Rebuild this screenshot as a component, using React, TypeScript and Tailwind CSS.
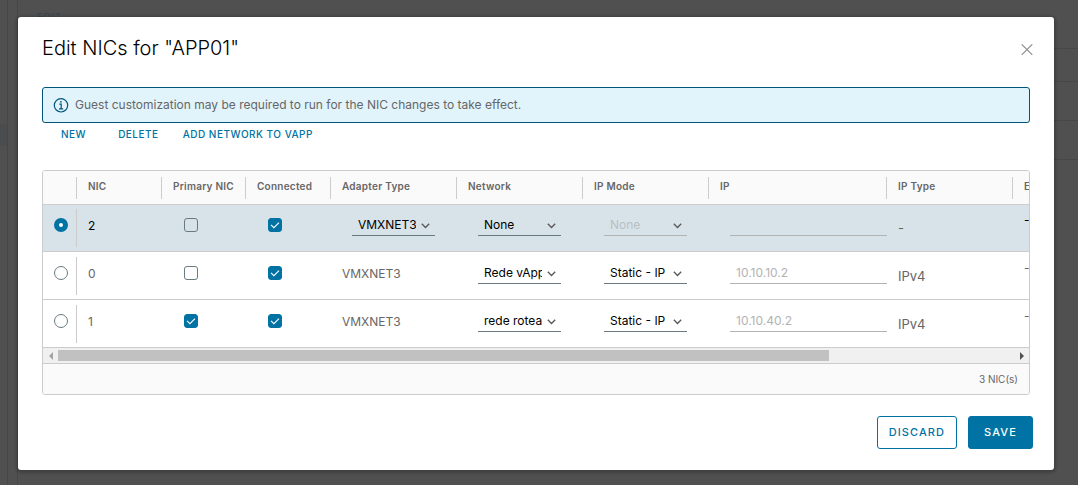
import { useRef, useState } from "react";

type Nic = {
  id: string;
  primary: boolean;
  connected: boolean;
  adapter: string;
  adapterEditable: boolean;
  network: string;
  ipMode: string;
  ip: string;
  ipType: string;
};

const nics: Nic[] = [
  { id: "2", primary: false, connected: true, adapter: "VMXNET3", adapterEditable: true, network: "None", ipMode: "None", ip: "", ipType: "-" },
  { id: "0", primary: false, connected: true, adapter: "VMXNET3", adapterEditable: false, network: "Rede vApp", ipMode: "Static - IP Pool", ip: "10.10.10.2", ipType: "IPv4" },
  { id: "1", primary: true, connected: true, adapter: "VMXNET3", adapterEditable: false, network: "rede roteada", ipMode: "Static - IP Pool", ip: "10.10.40.2", ipType: "IPv4" },
];

const columns = ["", "NIC", "Primary NIC", "Connected", "Adapter Type", "Network", "IP Mode", "IP", "IP Type", "External IP"];

function CheckBox({ label, defaultChecked }: { label: string; defaultChecked: boolean }) {
  return (
    <span className="relative mt-[13px] ml-[22px] block size-[14px]">
      <input
        type="checkbox"
        aria-label={label}
        defaultChecked={defaultChecked}
        className="peer block size-[14px] appearance-none rounded-[3px] border border-[#6a7a81] checked:border-[#0072a3] checked:bg-[#0072a3]"
      />
      <svg viewBox="0 0 14 14" className="pointer-events-none absolute inset-0 hidden size-[14px] peer-checked:block" fill="none" stroke="#fff" strokeWidth="1.1">
        <path d="M3 6.9 5.9 9.7 11 4.6" />
      </svg>
    </span>
  );
}

function Select({ label, value, disabled = false }: { label: string; value: string; disabled?: boolean }) {
  return (
    <span className="relative mt-2 ml-[21px] block w-[83px]">
      <select
        aria-label={label}
        disabled={disabled}
        defaultValue={value}
        className="block h-[23px] w-full appearance-none overflow-hidden border-b border-[#6a7a81] pt-px pr-[19px] pl-[6px] text-xs text-black disabled:border-[#b3b3b3] disabled:text-[#b8bfc3] disabled:opacity-100"
      >
        <option>{value}</option>
      </select>
      <svg viewBox="0 0 9 6" className="pointer-events-none absolute top-[10px] right-[5px] h-[6px] w-[9px]" fill="none" stroke="#565656" strokeWidth="1.3">
        <path d="M.8 .8 4.5 4.5 8.2 .8" />
      </svg>
    </span>
  );
}

function Backdrop() {
  return (
    <div aria-hidden="true" className="absolute inset-0 overflow-hidden bg-[#505050]">
      <div className="absolute top-0 bottom-0 left-0 w-2 border-r border-[#474747]">
        <div className="mt-[124px] h-[22px] bg-[#4a4c4e]" />
      </div>
      <div className="absolute top-0 bottom-0 left-[17px] border-l border-[#474747]" />
      <div className="absolute top-[11px] left-[37px] text-[10px] leading-3 tracking-wider text-[#35474e]">EDIT</div>
      <div className="absolute top-12 right-0 h-[34px] w-6 border-y border-[#474747]" />
      <div className="absolute top-[120px] right-0 h-10 w-6 border-y border-[#474747]" />
    </div>
  );
}

export default function App() {
  const [selected, setSelected] = useState("2");
  const viewport = useRef<HTMLDivElement>(null);
  const scroll = (left: number) => viewport.current?.scrollBy({ left });
  const action = "cursor-pointer text-[10px] leading-[22px] font-medium tracking-wider text-[#0072a3]";

  return (
    <div className="relative min-h-screen pt-[17px] pr-6 pb-[15px] pl-[18px] font-['Inter','Liberation_Sans',sans-serif] text-[#666]">
      <Backdrop />
      <section role="dialog" aria-labelledby="dialog-title" className="relative rounded-[3px] bg-white pt-[19px] pb-[21px] shadow-[0_1px_3px_2px_rgba(0,0,0,0.2)]">
        <header className="mx-6 flex items-start justify-between">
          <h1 id="dialog-title" className="text-xl leading-6 font-light text-black">Edit NICs for "APP01"</h1>
          <button type="button" aria-label="Close" className="mt-2 -mr-[3px] cursor-pointer">
            <svg viewBox="0 0 12 12" className="size-3" fill="none" stroke="#8c8c8c" strokeWidth="1.1">
              <path d="m.7.3 10.6 10.6M11.3.3.7 10.9" />
            </svg>
          </button>
        </header>

        <div role="status" className="mx-6 mt-[27px] flex h-9 items-center gap-[6px] rounded-[3px] border border-[#00567a] bg-[#e1f4fc] pl-[10px]">
          <svg viewBox="0 0 16 16" className="size-4 shrink-0" fill="none" stroke="#00567a" strokeWidth="1.2">
            <circle cx="8" cy="8.3" r="6.7" />
            <path d="M6.3 7.2H8.2V11.6M6 11.8h4.2" />
            <circle cx="7.9" cy="4.8" r=".9" fill="#00567a" stroke="none" />
          </svg>
          <p className="text-xs">Guest customization may be required to run for the NIC changes to take effect.</p>
        </div>

        <div className="mx-6 flex pl-[19px]">
          <button type="button" className={`${action} mr-8`}>NEW</button>
          <button type="button" className={`${action} mr-6`}>DELETE</button>
          <button type="button" className={action}>ADD NETWORK TO VAPP</button>
        </div>

        <div className="mx-6 mt-[25px] overflow-hidden rounded-[3px] border border-[#ccc]">
          <div ref={viewport} className="overflow-hidden">
            <table className="w-[1222px] table-fixed border-separate border-spacing-0 text-left">
              <colgroup>
                <col className="w-[34px]" />
                <col className="w-[85px]" />
                <col className="w-[84px]" />
                <col className="w-[85px]" />
                <col className="w-[126px]" />
                <col className="w-[126px]" />
                <col className="w-[126px]" />
                <col className="w-[178px]" />
                <col className="w-[126px]" />
                <col />
              </colgroup>
              <thead className="bg-[#fafafa]">
                <tr>
                  {columns.map((name, i) => (
                    <th key={i} scope="col" className="h-[34px] border-b border-[#ccc] p-0 align-middle">
                      <div className="h-[22px] border-r border-[#ccc] pl-[11px] text-[10px] leading-[19px] font-semibold tracking-wide">{name}</div>
                    </th>
                  ))}
                </tr>
              </thead>
              <tbody>
                {nics.map((nic) => {
                  const on = nic.id === selected;
                  return (
                    <tr
                      key={nic.id}
                      className={`h-12 text-xs first:h-[47px] [&:not(:first-child)>td]:pt-px [&>td]:border-b [&>td]:border-[#ccc] [&>td]:align-top ${on ? "bg-[#d8e3e9] text-black" : ""}`}
                    >
                      <td>
                        <div className="mt-1 h-[38px] border-r border-[#ccc] pt-[9px] pl-[11px]">
                          <input
                            type="radio"
                            name="nic"
                            aria-label={`Select NIC ${nic.id}`}
                            checked={on}
                            onChange={() => setSelected(nic.id)}
                            className="block size-[14px] appearance-none rounded-full border border-[#6a7a81] checked:border-[5px] checked:border-[#0072a3] checked:bg-white"
                          />
                        </div>
                      </td>
                      <td><div className="mt-[13px] pl-[11px] leading-4">{nic.id}</div></td>
                      <td><CheckBox label={`NIC ${nic.id} primary`} defaultChecked={nic.primary} /></td>
                      <td><CheckBox label={`NIC ${nic.id} connected`} defaultChecked={nic.connected} /></td>
                      <td>
                        {nic.adapterEditable
                          ? <Select label={`NIC ${nic.id} adapter type`} value={nic.adapter} />
                          : <div className="mt-[13px] pl-[11px] leading-4">{nic.adapter}</div>}
                      </td>
                      <td><Select label={`NIC ${nic.id} network`} value={nic.network} /></td>
                      <td><Select label={`NIC ${nic.id} IP mode`} value={nic.ipMode} disabled={nic.network === "None"} /></td>
                      <td>
                        <input
                          type="text"
                          aria-label={`NIC ${nic.id} IP`}
                          placeholder={nic.ip}
                          className="mt-2 ml-[21px] block h-[23px] w-[157px] border-b border-[#b3b3b3] px-[6px] text-xs placeholder:text-[#b3b3b3]"
                        />
                      </td>
                      <td><div className="mt-[15px] pl-[11px] text-[13px] leading-4 text-[#666]">{nic.ipType}</div></td>
                      <td><div className="mt-[7px] pl-[11px] leading-4">-</div></td>
                    </tr>
                  );
                })}
              </tbody>
            </table>
          </div>
          <div className="flex h-[15px] items-center bg-[#f0f0f0]">
            <button type="button" aria-label="Scroll left" onClick={() => scroll(-80)} className="flex w-[15px] shrink-0 justify-center">
              <svg viewBox="0 0 4 8" className="h-2 w-1" fill="#a3a3a3"><path d="M4 0v8L0 4z" /></svg>
            </button>
            <div className="flex-1">
              <div className="h-[11px] w-[80.6%] bg-[#c1c1c1]" />
            </div>
            <button type="button" aria-label="Scroll right" onClick={() => scroll(80)} className="flex w-[15px] shrink-0 justify-center">
              <svg viewBox="0 0 4 8" className="h-2 w-1" fill="#505050"><path d="M0 0v8l4-4z" /></svg>
            </button>
          </div>
          <div className="border-t border-[#ccc] bg-[#fafafa] pr-[11px] text-right text-[10px] leading-[30px]">3 NIC(s)</div>
        </div>

        <footer className="mt-[21px] mr-[21px] flex justify-end gap-[11px]">
          <button type="button" className="h-[33px] cursor-pointer rounded-[3px] border border-[#0072a3] px-[11px] text-[11px] font-medium tracking-widest text-[#0072a3]">DISCARD</button>
          <button type="button" className="h-[33px] cursor-pointer rounded-[3px] border border-[#0072a3] bg-[#0072a3] px-[15px] text-[11px] font-medium tracking-widest text-white">SAVE</button>
        </footer>
      </section>
    </div>
  );
}
